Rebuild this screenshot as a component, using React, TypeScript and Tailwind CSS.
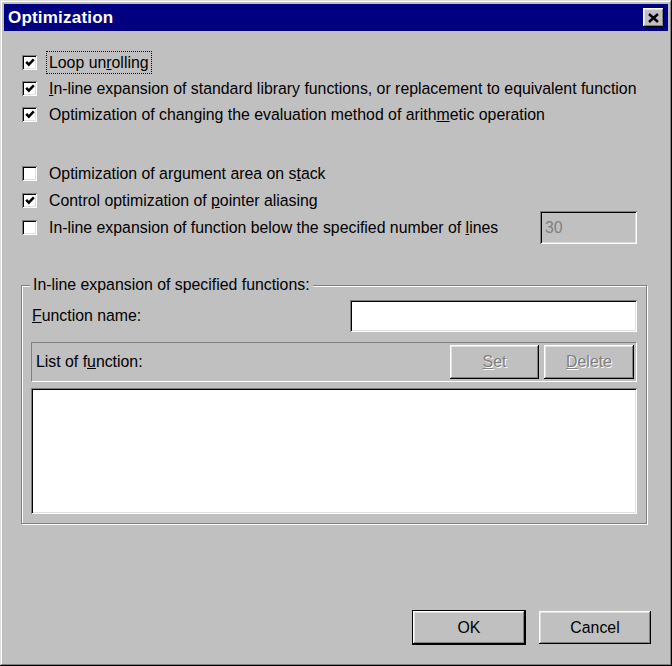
import React from "react";

const raised =
  "shadow-[inset_-1px_-1px_#000,inset_1px_1px_#fff,inset_-2px_-2px_#808080,inset_2px_2px_#dfdfdf]";
const sunken =
  "shadow-[inset_1px_1px_#808080,inset_-1px_-1px_#fff,inset_2px_2px_#000,inset_-2px_-2px_#dfdfdf]";

function Check({ checked }: { checked?: boolean }) {
  return (
    <div
      className={`w-[15px] h-[15px] bg-white shrink-0 flex items-center justify-center ${sunken}`}
    >
      {checked && (
        <svg width="10" height="9" viewBox="0 0 10 9">
          <path d="M1.2 3.8 L3.8 6.6 L8.8 1.4" fill="none" stroke="#000" strokeWidth="2.5" />
        </svg>
      )}
    </div>
  );
}

function Row({
  checked,
  children,
  h,
  focus,
  extra,
}: {
  checked?: boolean;
  children: React.ReactNode;
  h: string;
  focus?: boolean;
  extra?: React.ReactNode;
}) {
  return (
    <div className={`flex items-center ${h} pl-[1px]`}>
      <Check checked={checked} />
      <div
        className={`ml-[10px] px-[2px] leading-[21px] ${
          focus ? "outline-1 outline-dotted outline-black" : ""
        }`}
      >
        {children}
      </div>
      {extra}
    </div>
  );
}

const disabledText = "text-[#808080] [text-shadow:1px_1px_0_#fff]";

export default function App() {
  return (
    <div
      className={`w-[672px] h-[666px] bg-[#c0c0c0] p-[4px] flex flex-col text-[15.85px] text-black font-['Liberation_Sans',Arial,sans-serif] shadow-[inset_-1px_-1px_#000,inset_1px_1px_#dfdfdf,inset_-2px_-2px_#808080,inset_2px_2px_#fff]`}
    >
      {/* Title bar */}
      <div className="h-[27px] bg-[#000080] flex items-center justify-between pl-[4px] pr-[4px] shrink-0">
        <span className="text-white font-bold text-[17px] tracking-[0.2px]">Optimization</span>
        <div className={`w-[21px] h-[19px] bg-[#c0c0c0] flex items-center justify-center ${raised}`}>
          <svg width="11" height="10" viewBox="0 0 11 10">
            <path d="M1 1 L10 9 M10 1 L1 9" stroke="#000" strokeWidth="2.4" fill="none" />
          </svg>
        </div>
      </div>

      <div className="flex-1 flex flex-col pl-[17px] pr-[17px]">
        <div className="mt-[18px]">
          <Row h="h-[26px]" checked focus>
            Loop un<u>r</u>olling
          </Row>
          <Row h="h-[26px]" checked>
            <u>I</u>n-line expansion of standard library functions, or replacement to equivalent function
          </Row>
          <Row h="h-[26px]" checked>
            Optimization of changing the evaluation method of arith<u>m</u>etic operation
          </Row>
        </div>
        <div className="mt-[33px]">
          <Row h="h-[27px]">
            Optimization of argument area on s<u>t</u>ack
          </Row>
          <Row h="h-[27px]" checked>
            Control optimization of <u>p</u>ointer aliasing
          </Row>
          <Row
            h="h-[27px]"
            extra={
              <div
                className={`ml-auto mr-[14px] w-[97px] h-[33px] bg-[#c0c0c0] flex items-center pl-[5px] shrink-0 ${sunken}`}
              >
                <span className="text-[#808080]">30</span>
              </div>
            }
          >
            In-line expansion of function below the specified number of <u>l</u>ines
          </Row>
        </div>

        {/* Group box */}
        <div className="relative mt-[44px] mr-[4px] h-[239px] border border-[#808080] shadow-[inset_1px_1px_#fff,1px_1px_#fff] pt-[14px] pl-[9px] pr-[9px]">
          <div className="absolute left-[8px] top-[-11px] bg-[#c0c0c0] px-[3px] leading-[20px]">
            In-line expansion of specified functions:
          </div>
          <div className="flex items-center h-[32px]">
            <div className="pl-[1px]">
              <u>F</u>unction name:
            </div>
            <div className={`ml-auto w-[287px] h-[32px] bg-white ${sunken}`} />
          </div>
          <div className="mt-[10px] h-[40px] border-t border-l border-[#808080] border-b border-r border-b-white border-r-white flex items-center pl-[4px] pr-[2px]">
            <span>
              List of f<u>u</u>nction:
            </span>
            <div className="ml-auto flex gap-[5px]">
              <div className={`w-[89px] h-[34px] flex items-center justify-center ${raised} ${disabledText}`}>
                <span>
                  <u>S</u>et
                </span>
              </div>
              <div className={`w-[90px] h-[34px] flex items-center justify-center ${raised} ${disabledText}`}>
                <span>
                  <u>D</u>elete
                </span>
              </div>
            </div>
          </div>
          <div className={`mt-[6px] h-[126px] bg-white ${sunken}`} />
        </div>

        <div className="flex-1" />
        <div className="flex justify-end items-center gap-[13px] pb-[17px]">
          <div className="w-[114px] h-[35px] border border-black">
            <div className={`w-full h-full flex items-center justify-center ${raised}`}>OK</div>
          </div>
          <div className={`w-[112px] h-[33px] flex items-center justify-center ${raised}`}>Cancel</div>
        </div>
      </div>
    </div>
  );
}
